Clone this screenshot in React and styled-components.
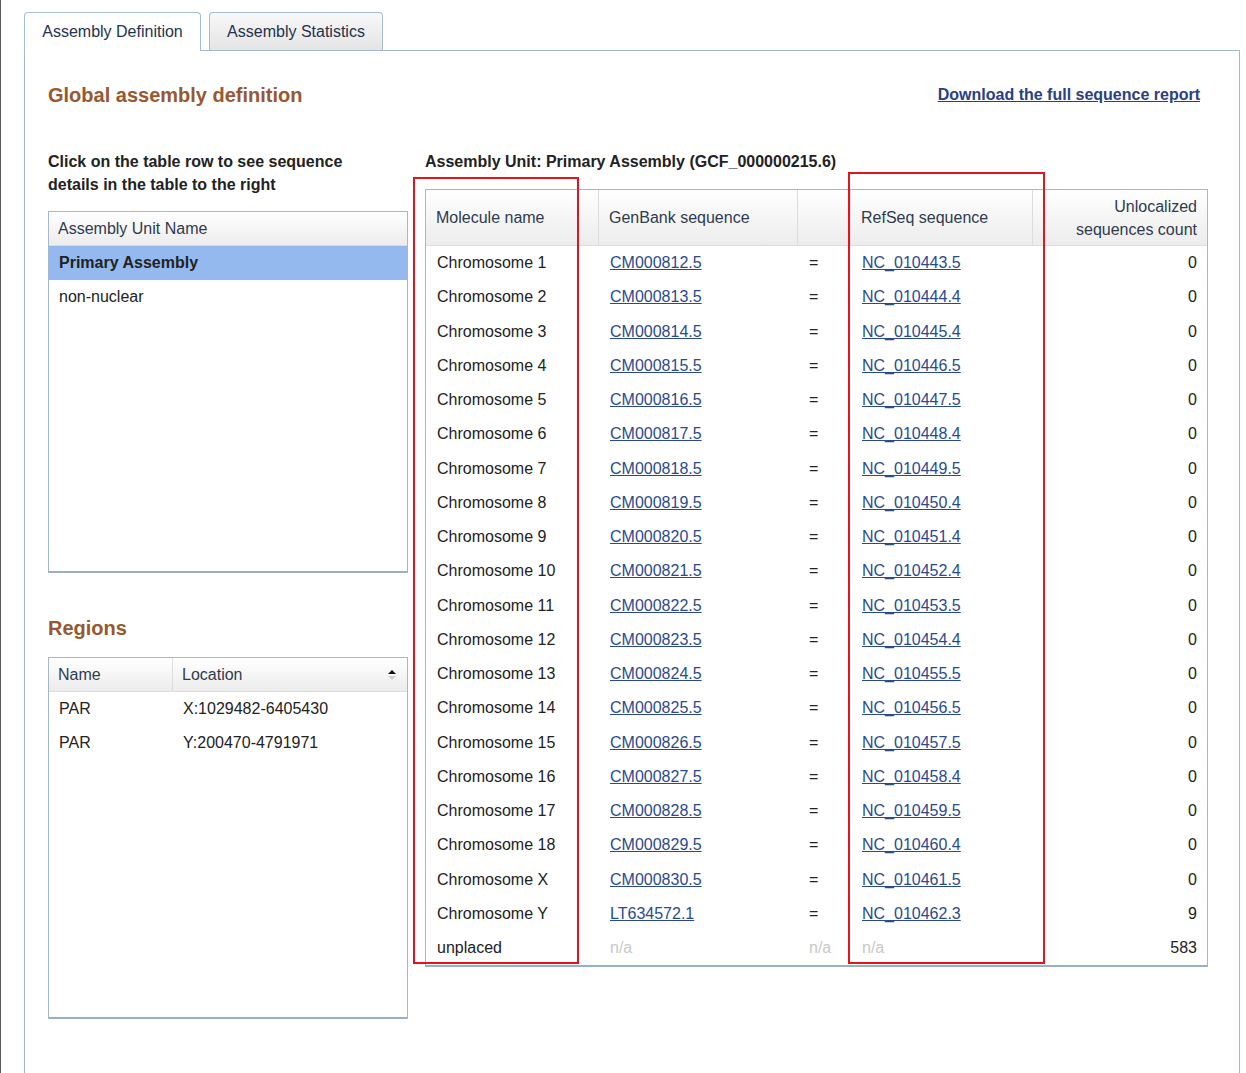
import React from 'react';
import styled, { createGlobalStyle } from 'styled-components';

const GlobalStyle = createGlobalStyle`
  body {
    margin: 0;
    background: #fff;
    font-family: "Liberation Sans", Arial, sans-serif;
    color: #222;
  }
`;

const rows = [
  ['Chromosome 1', 'CM000812.5', 'NC_010443.5', 0],
  ['Chromosome 2', 'CM000813.5', 'NC_010444.4', 0],
  ['Chromosome 3', 'CM000814.5', 'NC_010445.4', 0],
  ['Chromosome 4', 'CM000815.5', 'NC_010446.5', 0],
  ['Chromosome 5', 'CM000816.5', 'NC_010447.5', 0],
  ['Chromosome 6', 'CM000817.5', 'NC_010448.4', 0],
  ['Chromosome 7', 'CM000818.5', 'NC_010449.5', 0],
  ['Chromosome 8', 'CM000819.5', 'NC_010450.4', 0],
  ['Chromosome 9', 'CM000820.5', 'NC_010451.4', 0],
  ['Chromosome 10', 'CM000821.5', 'NC_010452.4', 0],
  ['Chromosome 11', 'CM000822.5', 'NC_010453.5', 0],
  ['Chromosome 12', 'CM000823.5', 'NC_010454.4', 0],
  ['Chromosome 13', 'CM000824.5', 'NC_010455.5', 0],
  ['Chromosome 14', 'CM000825.5', 'NC_010456.5', 0],
  ['Chromosome 15', 'CM000826.5', 'NC_010457.5', 0],
  ['Chromosome 16', 'CM000827.5', 'NC_010458.4', 0],
  ['Chromosome 17', 'CM000828.5', 'NC_010459.5', 0],
  ['Chromosome 18', 'CM000829.5', 'NC_010460.4', 0],
  ['Chromosome X', 'CM000830.5', 'NC_010461.5', 0],
  ['Chromosome Y', 'LT634572.1', 'NC_010462.3', 9],
  ['unplaced', null, null, 583],
];

const regions = [
  ['PAR', 'X:1029482-6405430'],
  ['PAR', 'Y:200470-4791971'],
];

const Page = styled.div`
  position: relative;
  box-sizing: border-box;
  min-height: 1073px;
  border-left: 1px solid #5a5a5a;
  padding: 12px 6px 0 23px;
  overflow: hidden;
`;

const Tabs = styled.div`
  display: flex;
  gap: 8px;
  align-items: flex-end;
  height: 38px;
`;

const Tab = styled.div`
  box-sizing: border-box;
  width: ${(p) => p.$width}px;
  height: ${(p) => (p.$active ? '39px' : '38px')};
  margin-bottom: ${(p) => (p.$active ? '-1px' : '0')};
  position: relative;
  z-index: 1;
  display: flex;
  align-items: center;
  justify-content: center;
  border: 1px solid #a6bcd3;
  border-bottom: none;
  border-radius: 4px 4px 0 0;
  background: ${(p) => (p.$active ? '#fff' : 'linear-gradient(#f8f8f8, #e4e4e4)')};
  color: #22334d;
  font-size: 16px;
`;

const Panel = styled.div`
  box-sizing: border-box;
  min-height: 1040px;
  border: 1px solid #a3b8ce;
  padding: 32px 38px 0 23px;
`;

const HeadRow = styled.div`
  display: flex;
  justify-content: space-between;
  align-items: center;
`;

const SectionTitle = styled.h2`
  margin: ${(p) => p.$margin || '0'};
  font-size: 20px;
  line-height: 24px;
  font-weight: bold;
  color: #98582f;
`;

const DownloadLink = styled.a`
  font-size: 16px;
  font-weight: bold;
  color: #27408a;
  text-decoration: underline;
  margin-right: 1px;
`;

const Columns = styled.div`
  display: flex;
  gap: 17px;
  margin-top: 43px;
`;

const LeftColumn = styled.div`
  width: 360px;
  flex: none;
`;

const RightColumn = styled.div`
  width: 783px;
  flex: none;
`;

const Note = styled.p`
  margin: 0 0 ${(p) => p.$gap}px;
  font-size: 16px;
  line-height: 23px;
  font-weight: bold;
  color: #222;
`;

const ListBox = styled.div`
  box-sizing: border-box;
  height: 362px;
  border: 1px solid #a3b8ce;
  border-bottom: 2px solid #98afc6;
`;

const ListTable = styled.table`
  width: 100%;
  border-collapse: separate;
  border-spacing: 0;
  font-size: 16px;
`;

const ListHead = styled.th`
  position: relative;
  width: ${(p) => (p.$width ? `${p.$width}px` : 'auto')};
  height: 33px;
  padding: 0 9px;
  text-align: left;
  font-weight: normal;
  color: #2f3b4e;
  background: linear-gradient(#fff, #ececec);
  border-bottom: 1px solid #dcdcdc;
  border-right: ${(p) => (p.$divider ? '1px solid #dcdcdc' : 'none')};
`;

const ListCell = styled.td`
  height: 34px;
  padding: 0 10px;
  color: #222;
  font-weight: ${(p) => (p.$selected ? 'bold' : 'normal')};
  background: ${(p) => (p.$selected ? '#93b9ef' : 'transparent')};
`;

const SortGlyph = styled.svg`
  position: absolute;
  right: 10px;
  top: 11px;
`;

const SeqTable = styled.table`
  width: 783px;
  border-collapse: separate;
  border-spacing: 0;
  table-layout: fixed;
  border: 1px solid #a3b8ce;
  border-bottom: 2px solid #98afc6;
  font-size: 16px;
`;

const SeqCol = styled.col`
  width: ${(p) => (p.$width ? `${p.$width}px` : 'auto')};
`;

const SeqHead = styled.th`
  height: 55px;
  padding: 0 10px;
  text-align: ${(p) => (p.$right ? 'right' : 'left')};
  font-weight: normal;
  line-height: 23px;
  color: #2f3b4e;
  background: linear-gradient(#fff, #ececec);
  border-bottom: 1px solid #dcdcdc;
  border-right: ${(p) => (p.$last ? 'none' : '1px solid #dcdcdc')};
`;

const SeqCell = styled.td`
  height: 34.25px;
  padding: 0 10px 0 ${(p) => (p.$right ? '10px' : '11px')};
  text-align: ${(p) => (p.$right ? 'right' : 'left')};
  color: #222;
  white-space: nowrap;
`;

const SeqLink = styled.a`
  color: #2b4a8e;
  text-decoration: underline;
`;

const NotAvailable = styled.span`
  color: #c8c8c8;
`;

const Marker = styled.div`
  position: absolute;
  box-sizing: border-box;
  left: ${(p) => p.$left}px;
  top: ${(p) => p.$top}px;
  width: ${(p) => p.$width}px;
  height: ${(p) => p.$height}px;
  border: 2px solid #e3131f;
  pointer-events: none;
`;

function SortIcon() {
  return (
    <SortGlyph width="10" height="12" viewBox="0 0 10 12">
      <path d="M1 5 L5 1 L9 5 Z" fill="#111" />
      <path d="M1 7 L9 7 L5 11 Z" fill="#cfcfcf" />
    </SortGlyph>
  );
}

function Seq({ id }) {
  return id ? <SeqLink href="#">{id}</SeqLink> : <NotAvailable>n/a</NotAvailable>;
}

function SequenceTable() {
  return (
    <SeqTable>
      <colgroup>
        <SeqCol $width={173} />
        <SeqCol $width={199} />
        <SeqCol $width={53} />
        <SeqCol $width={182} />
        <SeqCol />
      </colgroup>
      <thead>
        <tr>
          <SeqHead>Molecule name</SeqHead>
          <SeqHead>GenBank sequence</SeqHead>
          <SeqHead />
          <SeqHead>RefSeq sequence</SeqHead>
          <SeqHead $right $last>
            Unlocalized
            <br />
            sequences count
          </SeqHead>
        </tr>
      </thead>
      <tbody>
        {rows.map(([name, gb, rs, count]) => (
          <tr key={name}>
            <SeqCell>{name}</SeqCell>
            <SeqCell><Seq id={gb} /></SeqCell>
            <SeqCell>{gb ? '=' : <NotAvailable>n/a</NotAvailable>}</SeqCell>
            <SeqCell><Seq id={rs} /></SeqCell>
            <SeqCell $right>{count}</SeqCell>
          </tr>
        ))}
      </tbody>
    </SeqTable>
  );
}

export default function App() {
  return (
    <Page>
      <GlobalStyle />
      <Tabs>
        <Tab $active $width={177}>Assembly Definition</Tab>
        <Tab $width={174}>Assembly Statistics</Tab>
      </Tabs>

      <Panel>
        <HeadRow>
          <SectionTitle>Global assembly definition</SectionTitle>
          <DownloadLink href="#">Download the full sequence report</DownloadLink>
        </HeadRow>

        <Columns>
          <LeftColumn>
            <Note $gap={15}>
              Click on the table row to see sequence
              <br />
              details in the table to the right
            </Note>
            <ListBox>
              <ListTable>
                <thead>
                  <tr>
                    <ListHead>Assembly Unit Name</ListHead>
                  </tr>
                </thead>
                <tbody>
                  <tr>
                    <ListCell $selected>Primary Assembly</ListCell>
                  </tr>
                  <tr>
                    <ListCell>non-nuclear</ListCell>
                  </tr>
                </tbody>
              </ListTable>
            </ListBox>

            <SectionTitle $margin="43px 0 17px">Regions</SectionTitle>
            <ListBox>
              <ListTable>
                <thead>
                  <tr>
                    <ListHead $divider $width={105}>Name</ListHead>
                    <ListHead>
                      Location
                      <SortIcon />
                    </ListHead>
                  </tr>
                </thead>
                <tbody>
                  {regions.map(([n, loc]) => (
                    <tr key={loc}>
                      <ListCell>{n}</ListCell>
                      <ListCell>{loc}</ListCell>
                    </tr>
                  ))}
                </tbody>
              </ListTable>
            </ListBox>
          </LeftColumn>

          <RightColumn>
            <Note $gap={16}>Assembly Unit: Primary Assembly (GCF_000000215.6)</Note>
            <SequenceTable />
          </RightColumn>
        </Columns>
      </Panel>

      <Marker $left={412} $top={177} $width={166} $height={787} />
      <Marker $left={847} $top={172} $width={197} $height={792} />
    </Page>
  );
}
